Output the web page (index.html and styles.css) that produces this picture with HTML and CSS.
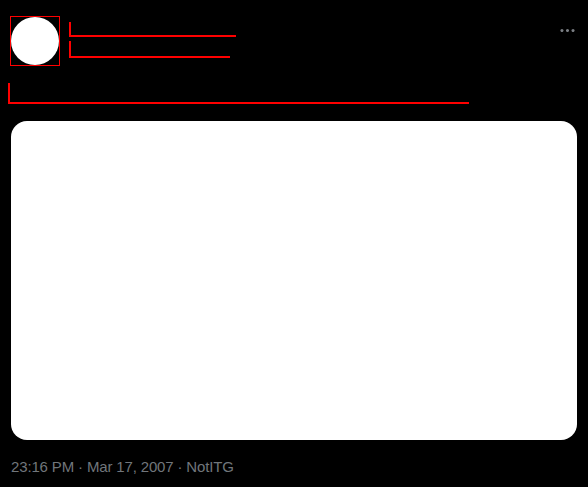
FILE: index.html
```html
<!DOCTYPE html>
<html lang="en">
<head>
  <meta charset="UTF-8">
  <meta name="viewport" content="width=device-width, initial-scale=1.0">
  <title>Tweet</title>
  <link rel="stylesheet" href="styles.css">
</head>
<body>
  <div class="tweet">
    <div class="tweet-header">
      <div class="avatar-box"><div class="avatar"></div></div>
      <div class="names">
        <span class="mark name"></span>
        <span class="mark handle"></span>
      </div>
      <svg class="more" viewBox="0 0 24 24" aria-hidden="true">
        <path d="M3 12c0-1.1.9-2 2-2s2 .9 2 2-.9 2-2 2-2-.9-2-2zm9 2c1.1 0 2-.9 2-2s-.9-2-2-2-2 .9-2 2 .9 2 2 2zm7 0c1.1 0 2-.9 2-2s-.9-2-2-2-2 .9-2 2 .9 2 2 2z"/>
      </svg>
    </div>
    <div class="mark text"></div>
    <div class="media"></div>
    <div class="meta">23:16 PM · Mar 17, 2007 · NotITG</div>
  </div>
</body>
</html>
```

FILE: styles.css
```css
body {
  margin: 0;
  background: #000;
  font-family: "Liberation Sans", Arial, sans-serif;
}
.tweet {
  padding: 16px 11px 0 11px;
}
.tweet-header {
  display: flex;
  align-items: flex-start;
}
.avatar-box {
  width: 50px;
  height: 50px;
  box-sizing: border-box;
  border: 1px solid #ff0000;
  margin-left: -1px;
}
.avatar {
  width: 48px;
  height: 48px;
  border-radius: 50%;
  background: #fff;
}
.names {
  display: flex;
  flex-direction: column;
  margin-left: 9px;
  padding-top: 6px;
  gap: 4px;
}
.mark {
  display: block;
  box-sizing: border-box;
  border-left: 2px solid #ff0000;
  border-bottom: 2px solid #ff0000;
}
.name {
  width: 167px;
  height: 15px;
}
.handle {
  width: 161px;
  height: 17px;
}
.more {
  width: 19px;
  height: 19px;
  margin-left: auto;
  margin-top: 5px;
  fill: #7a7e83;
}
.text {
  width: 461px;
  height: 21px;
  margin: 17px 0 0 -3px;
}
.media {
  height: 319px;
  margin-top: 17px;
  background: #fff;
  border-radius: 16px;
}
.meta {
  margin-top: 17px;
  font-size: 15px;
  line-height: 20px;
  letter-spacing: -0.15px;
  color: #71767b;
}
```
